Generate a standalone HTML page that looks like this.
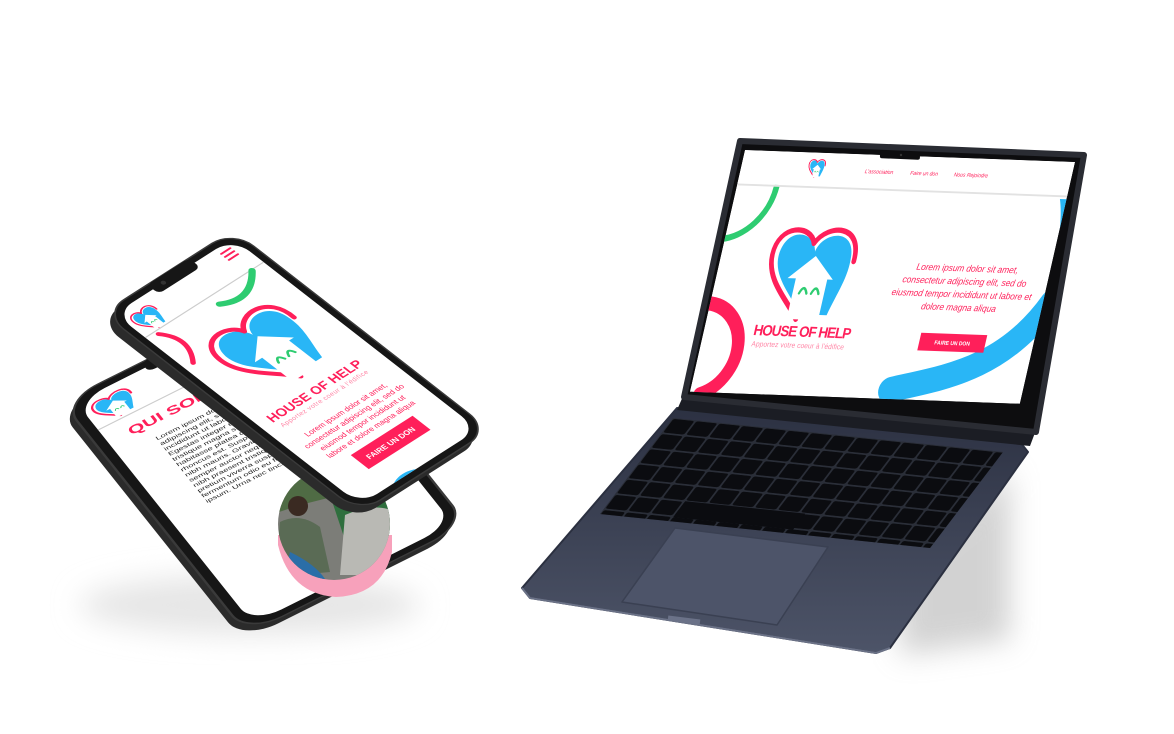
<!DOCTYPE html>
<html><head><meta charset="utf-8"><style>
html,body{margin:0;padding:0;background:#fff;}
svg{display:block;}
text{font-family:"Liberation Sans",sans-serif;}
</style></head><body>
<svg width="1174" height="734" viewBox="0 0 1174 734" xmlns="http://www.w3.org/2000/svg">
<defs>
<symbol id="logo" viewBox="0 0 100 100">
<path d="M50 32 C46 12 14 8 12 36 C11 58 36 74 48 92 L78 92 C84 70 92 55 90 36 C88 8 54 12 50 32Z" fill="#29b6f6"/>
<path d="M47 24 C40 6 5 6 5 36 C5 62 34 80 46 97" fill="none" stroke="#ff1f5a" stroke-width="5" stroke-linecap="round"/>
<path d="M47 24 C58 4 96 4 94 40" fill="none" stroke="#ff1f5a" stroke-width="5" stroke-linecap="round"/>
<path d="M27 58 L52 36 L76 58 L70 58 L70 97 L36 97 L36 58Z" fill="#fff"/>
<path d="M43 72 q4 -10 8 0 M56 72 q4 -10 8 0" fill="none" stroke="#2ecc71" stroke-width="2.5" stroke-linecap="round"/>
</symbol>
<pattern id="keys" patternUnits="userSpaceOnUse" width="23" height="19">
<rect width="23" height="19" fill="#2a2e38"/>
<rect x="1" y="1" width="21" height="17" rx="2" fill="#0b0c10"/>
</pattern>
<linearGradient id="deck" x1="0" y1="0" x2="0" y2="1">
<stop offset="0" stop-color="#2c3142"/><stop offset="1" stop-color="#4d5468"/>
</linearGradient>
<filter id="blur" x="-50%" y="-50%" width="200%" height="200%"><feGaussianBlur stdDeviation="14"/></filter>
<clipPath id="lscr"><rect x="0" y="0" width="400" height="260"/></clipPath>
<clipPath id="pscr"><rect x="9" y="9" width="182" height="382" rx="26"/></clipPath>
<clipPath id="photo"><circle cx="334" cy="524" r="56"/></clipPath>
</defs>

<path d="M900 560 L1010 470 L1010 640 L900 655Z" fill="#c8c8c8" filter="url(#blur)" opacity="0.8"/>
<ellipse cx="250" cy="605" rx="170" ry="30" fill="#e6e6e6" filter="url(#blur)"/>

<!-- LAPTOP -->
<path d="M677 408 L1020 442 L1028 452 L890 648 L876 653 L530 598 L522 588Z" fill="url(#deck)" stroke="#2b3040" stroke-width="2" stroke-linejoin="round"/>
<path d="M522 588 L530 598 L876 653 L890 648" fill="none" stroke="#6a7186" stroke-width="2"/>
<path d="M668 618 L700 622" stroke="#6b7288" stroke-width="5"/>
<g transform="matrix(1,0.103,-0.608,0.8,673,418)">
<rect x="0" y="0" width="330" height="120" fill="#2a2e38"/>
<rect x="0" y="0" width="330" height="120" fill="url(#keys)"/>
<rect x="70" y="95" width="120" height="20" fill="#0b0c10"/>
</g>
<path d="M675 528 L828 547 L777 625 L622 602Z" fill="#4d5469" stroke="#3a4052" stroke-width="1.5" stroke-linejoin="round"/>
<path d="M684 394 L1036 430 L1030 446 L677 410Z" fill="#1b1d24"/>
<path d="M740 141 L1084 155 L1036 432 L684 397Z" fill="#0d0d0f" stroke="#2a2c33" stroke-width="6" stroke-linejoin="round"/>
<g transform="matrix(0.825,0.03,-0.212,0.93,745,150)">
<g clip-path="url(#lscr)">
<rect width="400" height="260" fill="#fff"/>
<path d="M-6 96 A60 60 0 0 0 48 38" fill="none" stroke="#2ecc71" stroke-width="7" stroke-linecap="round"/>
<path d="M0 165 A50 50 0 0 1 12 262" fill="none" stroke="#ff1f5a" stroke-width="15" stroke-linecap="round"/>
<path d="M240 250 C300 235 370 225 410 150" fill="none" stroke="#29b6f6" stroke-width="28" stroke-linecap="round"/>
<path d="M392 40 C400 60 404 90 402 120 L420 120 L420 40 Z" fill="#29b6f6"/>
<rect x="0" y="0" width="400" height="36" fill="#fff"/>
<rect x="0" y="36" width="400" height="2" fill="#e2e2e2"/>
<use href="#logo" x="80" y="5" width="22" height="22"/>
<text x="150" y="20" font-size="6" fill="#ff1f5a" font-style="italic">L'association</text>
<text x="205" y="20" font-size="6" fill="#ff1f5a" font-style="italic">Faire un don</text>
<text x="258" y="20" font-size="6" fill="#ff1f5a" font-style="italic">Nous Rejoindre</text>
<use href="#logo" x="52" y="70" width="120" height="112"/>
<text x="60" y="197" font-size="16" font-weight="bold" fill="#ff1f5a" textLength="118">HOUSE OF HELP</text>
<text x="61" y="209" font-size="8" fill="#ff86a6" textLength="112">Apportez votre coeur à l'édifice</text>
<g font-size="10" font-style="italic" fill="#ff1f5a" text-anchor="middle">
<text x="300" y="121">Lorem ipsum dolor sit amet,</text>
<text x="300" y="135">consectetur adipiscing elit, sed do</text>
<text x="300" y="149">eiusmod tempor incididunt ut labore et</text>
<text x="300" y="163">dolore magna aliqua</text>
</g>
<rect x="262" y="188" width="80" height="19" fill="#ff1f5a"/>
<text x="302" y="200" font-size="6" font-weight="bold" fill="#fff" text-anchor="middle">FAIRE UN DON</text>
</g>
</g>
<rect x="880" y="151" width="40" height="8" rx="2" fill="#0d0d0f" transform="rotate(2.3 900 155)"/>
<circle cx="901" cy="155" r="1.2" fill="#333"/>

<!-- BACK PHONE -->
<g transform="translate(-4,7) matrix(1.1,-0.55,0.4625,0.58,62,402)">
<rect x="0" y="0" width="200" height="400" rx="32" fill="#2b2b2b"/>
</g>
<g transform="matrix(1.1,-0.55,0.4625,0.58,62,402)">
<rect x="0" y="0" width="200" height="400" rx="32" fill="#161616" stroke="#3a3a3a" stroke-width="2"/>
<g clip-path="url(#pscr)">
<rect x="0" y="0" width="200" height="400" fill="#fff"/>
<use href="#logo" x="14" y="16" width="38" height="38"/>
<rect x="0" y="56" width="200" height="1.5" fill="#ccc"/>
<text x="28" y="84" font-size="17" font-weight="bold" fill="#ff1f5a">QUI SOMMES NOUS</text>
<g font-size="7.5" fill="#222">
<text x="42" y="106">Lorem ipsum dolor sit amet, consectetur</text>
<text x="42" y="115">adipiscing elit, sed do eiusmod tempor</text>
<text x="42" y="124">incididunt ut labore et dolore magna</text>
<text x="42" y="133">Egestas integer eget aliquet nibh</text>
<text x="42" y="142">tristique magna sit amet purus gravida</text>
<text x="42" y="151">habitasse platea dictumst vestibulum</text>
<text x="42" y="160">rhoncus est. Suspendisse in est ante</text>
<text x="42" y="169">nibh mauris. Gravida cum sociis natoque</text>
<text x="42" y="178">semper auctor neque vitae tempus</text>
<text x="42" y="187">nibh praesent tristique magna sit</text>
<text x="42" y="196">pretium viverra suspendisse potenti</text>
<text x="42" y="205">fermentum odio eu feugiat pretium</text>
<text x="42" y="214">ipsum. Urna nec tincidunt praesent</text>
</g>
</g>
<rect x="72" y="0" width="56" height="16" rx="6" fill="#161616"/>
</g>
<!-- photo in real coords -->
<path d="M278 545 Q290 594 336 597 Q382 595 392 552 L392 535 L278 535Z" fill="#f7a1bb"/>
<g clip-path="url(#photo)">
<rect x="270" y="465" width="140" height="120" fill="#7c7d78"/>
<path d="M270 465 L350 465 L340 495 L300 505 L270 515Z" fill="#4f6b44"/>
<path d="M330 495 L400 485 L400 535 L345 540Z" fill="#2f6f3e"/>
<path d="M345 515 Q380 500 400 515 L400 575 L340 575Z" fill="#b9b9b4"/>
<circle cx="298" cy="506" r="10" fill="#3a2a22"/>
<path d="M280 522 Q300 512 320 527 L330 572 L275 577Z" fill="#5a6b55"/>
<path d="M290 552 Q315 564 325 579 L282 586Z" fill="#2b6ea8"/>
</g>

<!-- FRONT PHONE -->
<g transform="translate(-5,8) matrix(0.65,-0.415,0.6425,0.5,103,313)">
<rect x="0" y="0" width="200" height="400" rx="32" fill="#2b2b2b"/>
</g>
<g transform="matrix(0.65,-0.415,0.6425,0.5,103,313)">
<rect x="0" y="0" width="200" height="400" rx="32" fill="#161616" stroke="#3a3a3a" stroke-width="2"/>
<g clip-path="url(#pscr)">
<rect x="0" y="0" width="200" height="400" fill="#fff"/>
<use href="#logo" x="14" y="18" width="38" height="38"/>
<rect x="0" y="56" width="200" height="1.5" fill="#ccc"/>
<path d="M164 18 h14 M164 24 h14 M164 30 h14" stroke="#ff1f5a" stroke-width="2.5" stroke-linecap="round"/>
<path d="M108 72 Q140 92 172 58" fill="none" stroke="#2ecc71" stroke-width="8" stroke-linecap="round"/>
<path d="M24 62 Q48 88 22 118" fill="none" stroke="#ff1f5a" stroke-width="6" stroke-linecap="round"/>
<use href="#logo" x="42" y="90" width="122" height="122"/>
<text x="24" y="240" font-size="17" font-weight="bold" fill="#ff1f5a" textLength="140">HOUSE OF HELP</text>
<text x="28" y="252" font-size="8.5" fill="#ff86a6" textLength="132">Apportez votre coeur à l'édifice</text>
<g font-size="10" fill="#ff1f5a" text-anchor="middle">
<text x="100" y="280">Lorem ipsum dolor sit amet,</text>
<text x="100" y="293">consectetur adipiscing elit, sed do</text>
<text x="100" y="306">eiusmod tempor incididunt ut</text>
<text x="100" y="319">labore et dolore magna aliqua</text>
</g>
<rect x="55" y="330" width="95" height="28" fill="#ff1f5a"/>
<text x="102" y="348" font-size="10" font-weight="bold" fill="#fff" text-anchor="middle">FAIRE UN DON</text>
<circle cx="78" cy="425" r="38" fill="#29b6f6"/>
</g>
<rect x="68" y="0" width="64" height="18" rx="7" fill="#161616"/>
<circle cx="84" cy="9" r="3" fill="#333"/>
</g>
</svg>
</body></html>
